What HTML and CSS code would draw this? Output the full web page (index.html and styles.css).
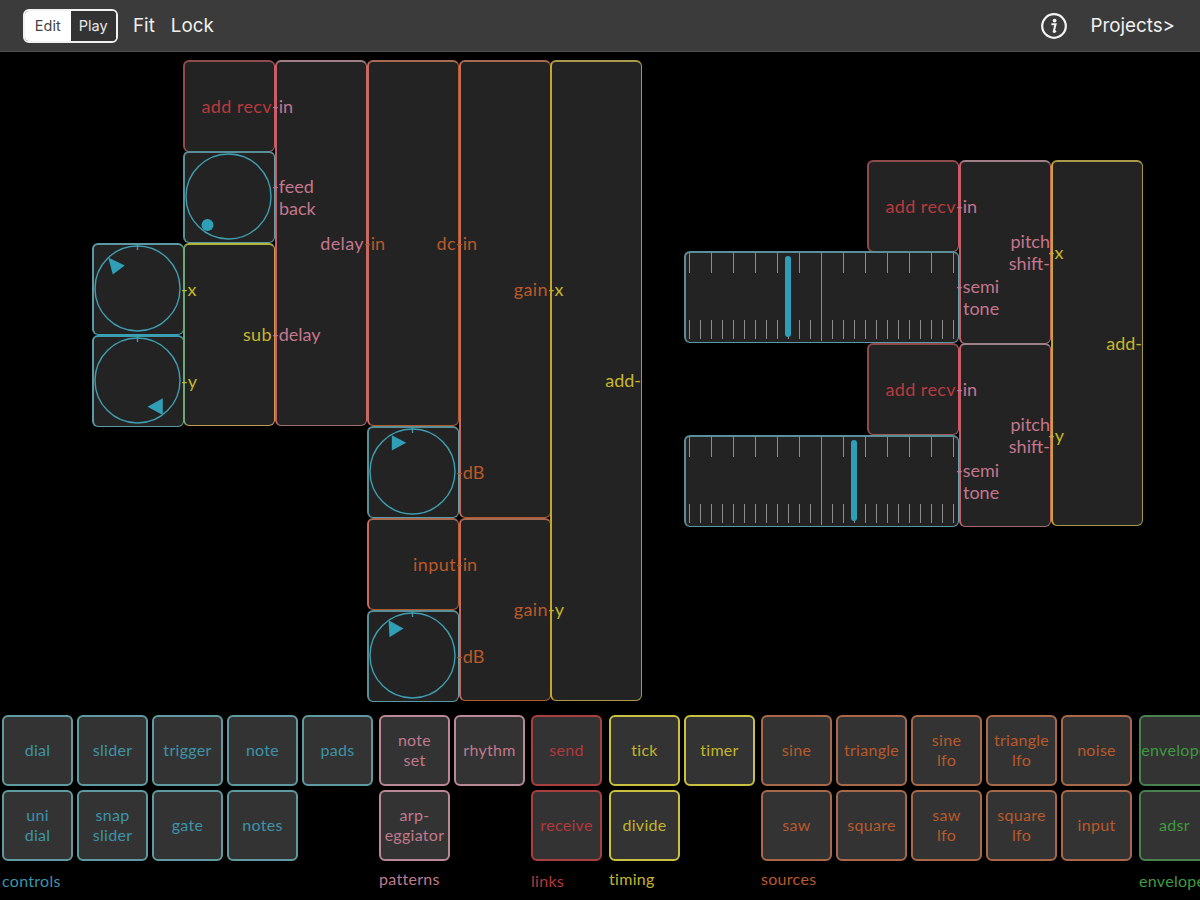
FILE: index.html
```html
<!DOCTYPE html>
<html lang="en">
<head>
    <meta charset="UTF-8">
    <meta name="viewport" content="width=device-width, initial-scale=1.0">
    <title>Patch Editor</title>
    <link rel="stylesheet" href="styles.css">
</head>
<body>
    <svg class="defs" aria-hidden="true">
        <symbol id="scale" viewBox="0 0 275 92">
            <path d="M5.5 2V22M27.5 2V22M49.5 2V22M71.5 2V22M93.5 2V22M115.5 2V22M159.5 2V22M181.5 2V22M203.5 2V22M225.5 2V22M247.5 2V22M269.5 2V22"/>
            <path d="M137.5 2V90"/>
            <path d="M5.5 69V88M16.5 69V88M27.5 69V88M38.5 69V88M49.5 69V88M60.5 69V88M71.5 69V88M82.5 69V88M93.5 69V88M104.5 69V88M115.5 69V88M126.5 69V88M148.5 69V88M159.5 69V88M170.5 69V88M181.5 69V88M192.5 69V88M203.5 69V88M214.5 69V88M225.5 69V88M236.5 69V88M247.5 69V88M258.5 69V88M269.5 69V88"/>
        </symbol>
    </svg>

    <header class="topbar">
        <div class="segmented">
            <span class="seg seg-on">Edit</span>
            <span class="seg">Play</span>
        </div>
        <span class="bar-link">Fit</span>
        <span class="bar-link">Lock</span>
        <svg class="info-icon" viewBox="0 0 26 26">
            <circle cx="13" cy="13" r="11.8"/>
            <circle class="info-dot" cx="13.6" cy="7.6" r="1.9"/>
            <path class="info-stem" d="M10.4 11.3h4.2l-1.9 7.2c-.1.5.3.6.7.4l1.6-1"/>
        </svg>
        <span class="bar-link">Projects&gt;</span>
    </header>

    <main class="canvas">
        <!-- left patch -->
        <div class="node red n-recv-a"><span class="name">add recv</span><span class="port t-pink">-in</span></div>
        <div class="node teal n-feed">
            <svg class="dial" viewBox="0 0 92 92">
                <circle cx="45.5" cy="45.5" r="42.5"/>
                <circle class="mark" cx="24.5" cy="74" r="6"/>
            </svg>
            <span class="port t-pink">-feed<span class="indent">back</span></span>
        </div>
        <div class="node yellow n-sub"><span class="name">sub</span><span class="port t-pink">-delay</span></div>
        <div class="node teal n-dial-x">
            <svg class="dial" viewBox="0 0 92 92">
                <circle cx="45.5" cy="45.5" r="42.5"/>
                <path d="M45.5 1V7"/>
                <polygon class="mark" points="16.2,14.5 32.8,22.5 20.8,31.5"/>
            </svg>
            <span class="port t-yellow">-x</span>
        </div>
        <div class="node teal n-dial-y">
            <svg class="dial" viewBox="0 0 92 92">
                <circle cx="45.5" cy="45.5" r="42.5"/>
                <path d="M45.5 1V7"/>
                <polygon class="mark" points="70.8,63.3 55.5,71.7 70.8,80"/>
            </svg>
            <span class="port t-yellow">-y</span>
        </div>
        <div class="node pink n-delay"><span class="name">delay</span><span class="port t-orange">-in</span></div>
        <div class="node orange n-dc"><span class="name">dc</span><span class="port t-orange">-in</span></div>
        <div class="node teal n-db-a">
            <svg class="dial" viewBox="0 0 92 92">
                <circle cx="45.5" cy="45.5" r="42.5"/>
                <path d="M45.5 1V7"/>
                <polygon class="mark" points="24.8,9.2 39.2,16.8 24.8,24.5"/>
            </svg>
            <span class="port t-orange">-dB</span>
        </div>
        <div class="node orange n-gain-x"><span class="name">gain</span><span class="port t-yellow">-x</span></div>
        <div class="node orange n-input"><span class="name">input</span><span class="port t-orange">-in</span></div>
        <div class="node teal n-db-b">
            <svg class="dial" viewBox="0 0 92 92">
                <circle cx="45.5" cy="45.5" r="42.5"/>
                <path d="M45.5 1V7"/>
                <polygon class="mark" points="21.5,10.2 36.5,18.5 22.5,27.2"/>
            </svg>
            <span class="port t-orange">-dB</span>
        </div>
        <div class="node orange n-gain-y"><span class="name">gain</span><span class="port t-yellow">-y</span></div>
        <div class="node yellow n-add-a"><span class="name flush">add-</span></div>

        <!-- right patch -->
        <div class="node red n-recv-b"><span class="name">add recv</span><span class="port t-pink">-in</span></div>
        <div class="node teal n-slide-a">
            <svg class="scale"><use href="#scale"/></svg>
            <span class="handle handle-a"></span>
            <span class="port t-pink">-semi<span class="indent">tone</span></span>
        </div>
        <div class="node pink n-pitch-a"><span class="name flush">pitch<br>shift-</span><span class="port t-yellow">-x</span></div>
        <div class="node red n-recv-c"><span class="name">add recv</span><span class="port t-pink">-in</span></div>
        <div class="node teal n-slide-b">
            <svg class="scale"><use href="#scale"/></svg>
            <span class="handle handle-b"></span>
            <span class="port t-pink">-semi<span class="indent">tone</span></span>
        </div>
        <div class="node pink n-pitch-b"><span class="name flush">pitch<br>shift-</span><span class="port t-yellow">-y</span></div>
        <div class="node yellow n-add-b"><span class="name flush">add-</span></div>
    </main>

    <section class="palette">
        <div class="group g-controls">
            <div class="tiles five">
                <div class="tile">dial</div>
                <div class="tile">slider</div>
                <div class="tile">trigger</div>
                <div class="tile">note</div>
                <div class="tile">pads</div>
                <div class="tile">uni<br>dial</div>
                <div class="tile">snap<br>slider</div>
                <div class="tile">gate</div>
                <div class="tile">notes</div>
            </div>
            <div class="group-name name-low">controls</div>
        </div>
        <div class="group g-patterns">
            <div class="tiles two">
                <div class="tile">note<br>set</div>
                <div class="tile">rhythm</div>
                <div class="tile">arp-<br>eggiator</div>
            </div>
            <div class="group-name">patterns</div>
        </div>
        <div class="group g-links">
            <div class="tiles one">
                <div class="tile">send</div>
                <div class="tile">receive</div>
            </div>
            <div class="group-name name-low">links</div>
        </div>
        <div class="group g-timing">
            <div class="tiles two">
                <div class="tile">tick</div>
                <div class="tile">timer</div>
                <div class="tile">divide</div>
            </div>
            <div class="group-name">timing</div>
        </div>
        <div class="group g-sources">
            <div class="tiles five">
                <div class="tile">sine</div>
                <div class="tile">triangle</div>
                <div class="tile">sine<br>lfo</div>
                <div class="tile">triangle<br>lfo</div>
                <div class="tile">noise</div>
                <div class="tile">saw</div>
                <div class="tile">square</div>
                <div class="tile">saw<br>lfo</div>
                <div class="tile">square<br>lfo</div>
                <div class="tile">input</div>
            </div>
            <div class="group-name">sources</div>
        </div>
        <div class="group g-envelopes">
            <div class="tiles one">
                <div class="tile">envelope</div>
                <div class="tile">adsr</div>
            </div>
            <div class="group-name name-low">envelopes</div>
        </div>
    </section>
</body>
</html>
```

FILE: styles.css
```css
* {
    margin: 0;
    padding: 0;
    box-sizing: border-box;
}

body {
    width: 1200px;
    height: 900px;
    overflow: hidden;
    background: #000;
    font-family: 'Lato', sans-serif;
    display: flex;
    flex-direction: column;
}

.defs {
    position: absolute;
    width: 0;
    height: 0;
}

/* top bar */
.topbar {
    height: 52px;
    flex: none;
    display: flex;
    align-items: center;
    padding: 0 25px 0 23px;
    gap: 16px;
    background: #3b3b3b;
    border-bottom: 1px solid #4d4d4d;
    font-family: 'Inter', 'Liberation Sans', sans-serif;
}

.segmented {
    display: flex;
    width: 95px;
    height: 34px;
    margin-right: -1px;
    border: 2px solid #f2f2f2;
    border-radius: 6px;
    overflow: hidden;
}

.seg {
    flex: 1;
    display: flex;
    align-items: center;
    justify-content: center;
    font-size: 14.5px;
    color: #e8e8e8;
    background: #333;
}

.seg-on {
    background: #fff;
    color: #444;
}

.bar-link {
    font-size: 18.8px;
    color: #f0f0f0;
}

.info-icon {
    width: 26px;
    height: 26px;
    margin-left: auto;
    margin-right: 7px;
    fill: none;
    stroke: #f4f4f4;
    stroke-width: 2.2;
}

.info-dot {
    fill: #f4f4f4;
    stroke: none;
}

.info-stem {
    stroke-width: 2;
}

/* patch canvas */
.canvas {
    position: relative;
    height: 663px;
    flex: none;
}

.node {
    position: absolute;
    display: flex;
    align-items: center;
    justify-content: flex-end;
    padding-bottom: 2px;
    background: #232323;
    border-style: solid;
    border-width: 2px 1px 1px 2px;
    border-radius: 6px;
    font-size: 18px;
    line-height: 22px;
    white-space: nowrap;
}

.name {
    padding-right: 2px;
    text-align: right;
    letter-spacing: 0.4px;
}

.flush {
    padding-right: 0;
    letter-spacing: 0;
}

.port {
    position: absolute;
    left: 100%;
    top: 50%;
    margin-top: -1px;
    margin-left: -2px;
    transform: translateY(-50%);
    z-index: 2;
}

.indent {
    display: block;
    padding-left: 7px;
}

.t-pink { color: #c4778e; }
.t-orange { color: #b95a2b; }
.t-yellow { color: #c6b62c; }

.red { color: #b93a3e; border-color: #8f4a4c #cf5a64 #a0575b #8f4a4c; }
.pink { color: #c4778e; border-color: #a08088 #c96a62 #a06a70 #c4606a; }
.orange { color: #b95a2b; border-color: #a86a50 #b5602c #b05a30 #c86a60; }
.yellow { color: #c6b62c; border-color: #a89a4a #a89a3a #a89a4a #c8a52a; }
.teal { color: #3b9fb2; border-color: #5b8f98 #6ca0a8 #5b9aa5 #5b8f98; }

.n-recv-a { left: 183px; top: 8px; width: 92px; height: 92px; }
.n-feed { left: 183px; top: 99px; width: 92px; height: 92px; }
.n-sub { left: 183px; top: 191px; width: 92px; height: 183px; border-color: #b5b23c #d09a50 #c09a55 #6fa878; }
.n-dial-x { left: 92px; top: 191px; width: 92px; height: 92px; border-color: #5b9aa5 #6fa878 #3b9fb2 #5b9aa5; }
.n-dial-y { left: 92px; top: 283px; width: 92px; height: 92px; border-color: #3b9fb2 #6fa878 #5b9aa5 #5b9aa5; }
.n-delay { left: 275px; top: 8px; width: 92px; height: 366px; }
.n-dc { left: 367px; top: 8px; width: 92px; height: 366px; }
.n-db-a { left: 367px; top: 374px; width: 92px; height: 92px; }
.n-gain-x { left: 459px; top: 8px; width: 92px; height: 458px; }
.n-input { left: 367px; top: 466px; width: 92px; height: 92px; }
.n-db-b { left: 367px; top: 558px; width: 92px; height: 92px; }
.n-gain-y { left: 459px; top: 466px; width: 92px; height: 183px; }
.n-add-a { left: 550px; top: 8px; width: 92px; height: 641px; }

.n-recv-b { left: 867px; top: 108px; width: 92px; height: 92px; }
.n-slide-a { left: 684px; top: 199px; width: 275px; height: 92px; }
.n-pitch-a { left: 959px; top: 108px; width: 92px; height: 184px; }
.n-recv-c { left: 867px; top: 291px; width: 92px; height: 92px; }
.n-slide-b { left: 684px; top: 383px; width: 275px; height: 92px; }
.n-pitch-b { left: 959px; top: 291px; width: 92px; height: 184px; }
.n-add-b { left: 1051px; top: 108px; width: 92px; height: 366px; }

.dial {
    position: absolute;
    left: -2px;
    top: -2px;
    width: 92px;
    height: 92px;
    fill: none;
    stroke: #3f9fb0;
    stroke-width: 1.4;
}

.dial .mark {
    fill: #2f9fb8;
    stroke: none;
}

.scale {
    position: absolute;
    left: -2px;
    top: -2px;
    width: 275px;
    height: 92px;
    fill: none;
    stroke: #8c8c8c;
    stroke-width: 1;
}

.handle {
    position: absolute;
    top: 3px;
    width: 6px;
    height: 81px;
    border-radius: 3px;
    background: #2f9fb8;
}

.handle-a { left: 99px; }
.handle-b { left: 165px; }

/* palette */
.palette {
    display: flex;
    gap: 6px;
    padding-left: 2px;
    flex: 1;
}

.tiles {
    display: grid;
    grid-template-rows: 71px 71px;
    gap: 4px;
}

.five { grid-template-columns: repeat(5, 71px); }
.two { grid-template-columns: repeat(2, 71px); }
.one { grid-template-columns: 71px; }

.two .tile:nth-child(3) { grid-row: 2; }
.five .tile:nth-child(n+6) { grid-row: 2; }

.g-timing, .g-envelopes { margin-left: 1px; }

.tile {
    display: flex;
    align-items: center;
    justify-content: center;
    padding-bottom: 2px;
    text-align: center;
    white-space: nowrap;
    background: #333;
    border: 2px solid;
    border-radius: 6px;
    font-size: 16px;
    line-height: 20px;
    letter-spacing: 0.3px;
}

.group-name {
    margin-top: 8px;
    font-size: 16px;
    line-height: 20px;
    letter-spacing: 0.3px;
    white-space: nowrap;
}

.name-low { margin-top: 10px; }

.g-controls { color: #3d93a8; }
.g-controls .tile { border-color: #5f9aa0; }
.g-patterns { color: #bf7a8e; }
.g-patterns .tile { border-color: #b98a95; }
.g-links { color: #b5383c; }
.g-links .tile { border-color: #a8403f; }
.g-timing { color: #c2b62c; }
.g-timing .tile { border-color: #c9c13f; }
.g-sources { color: #b75a2c; }
.g-sources .tile { border-color: #a8694a; }
.g-envelopes { color: #3f9a3f; }
.g-envelopes .tile { border-color: #4a8150; }
```
